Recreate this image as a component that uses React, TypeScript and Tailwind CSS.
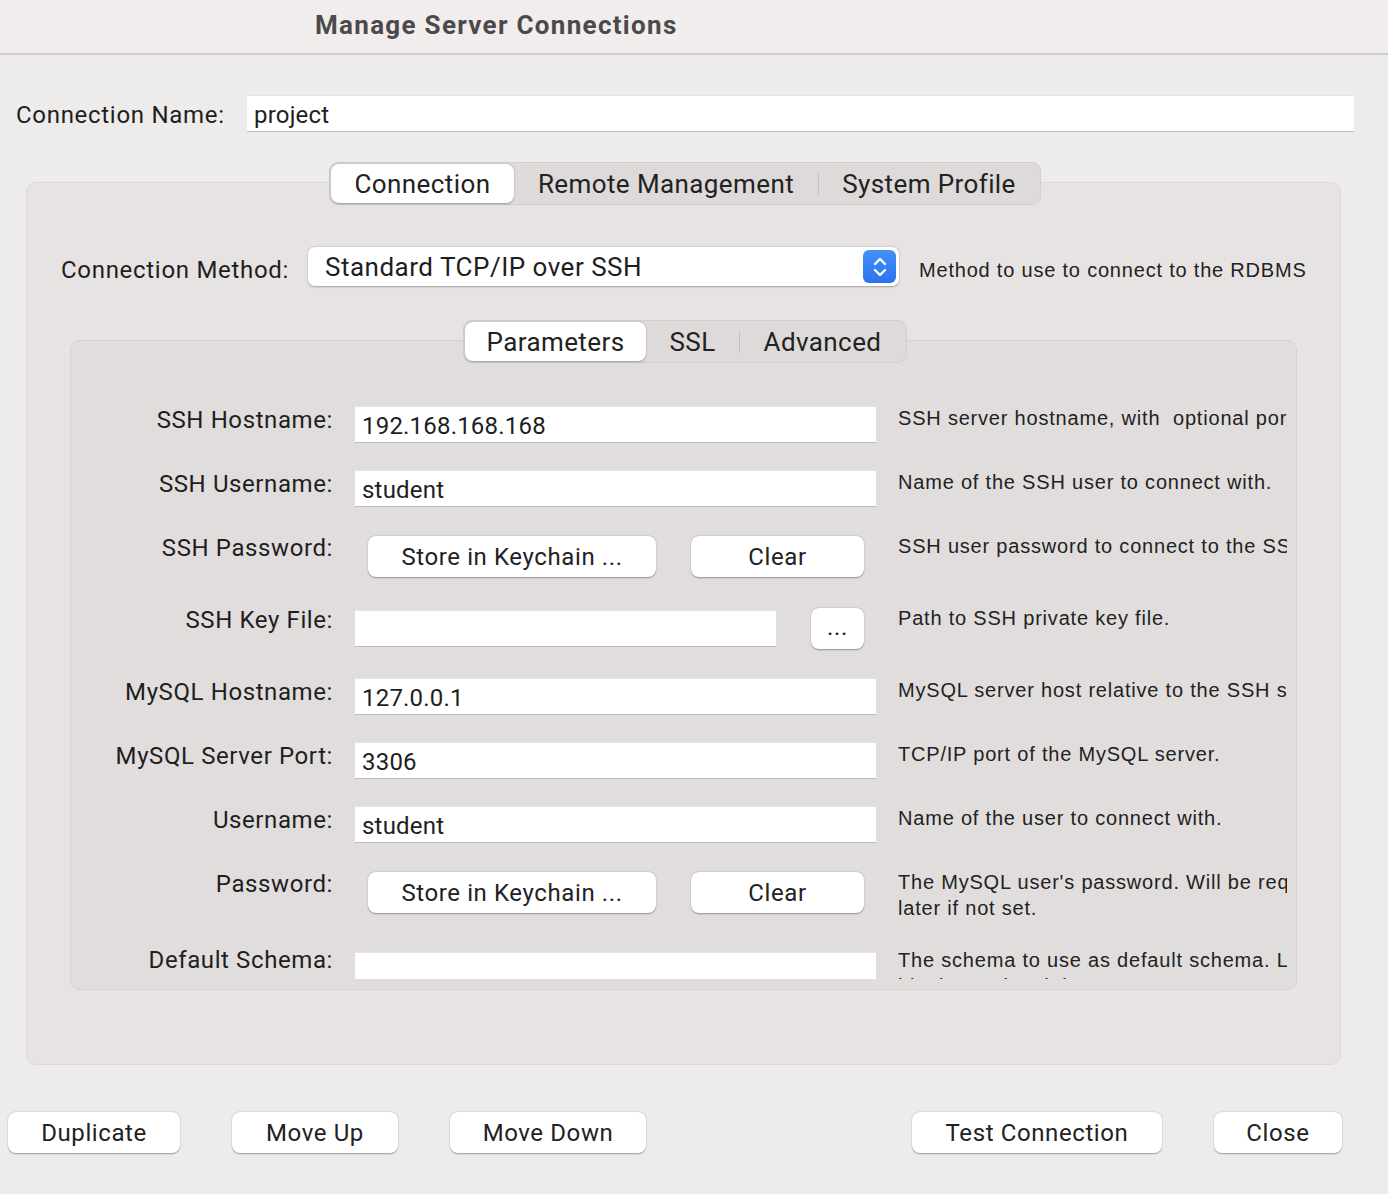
import React from 'react'

const sans = { fontFamily: 'Roboto, "Noto Sans", sans-serif' }
const desc = { fontFamily: '"Liberation Sans", Arial, sans-serif' }

function TextInput({ value = '', width = 'w-[521px]', extra = '' }: { value?: string; width?: string; extra?: string }) {
    return (
        <div className={`${width} h-[37px] bg-white border-t border-t-[#e4e2e2] border-b border-b-[#bdbaba] flex items-center pl-[7px] pt-[3px] text-[24px] leading-[30px] tracking-[0.2px] text-[#1e1e1e] ${extra}`}>
            {value}
        </div>
    )
}

function MacButton({ label, className = '' }: { label: string; className?: string }) {
    return (
        <div className={`h-[41px] bg-white rounded-[8px] shadow-[0_0.5px_1.5px_rgba(0,0,0,0.35)] flex items-center justify-center text-[24px] leading-[30px] tracking-[0.6px] text-[#222] ${className}`}>
            {label}
        </div>
    )
}

function Segmented({ items, widths, selected }: { items: string[]; widths: string[]; selected: number }) {
    return (
        <div className="relative z-10 mx-auto flex h-[43px] items-stretch rounded-[9px] bg-[#dedada] border border-[#d3cfcf] p-[1px]">
            {items.map((it, i) => (
                <div key={it} className={`${widths[i]} flex items-center`}>
                    {i > 0 && i !== selected && i - 1 !== selected && <div className="h-[22px] w-px bg-[#c4c0c0]" />}
                    <div className={`flex-1 h-full flex items-center justify-center text-[26px] leading-[30px] tracking-[0.4px] text-[#222] ${i === selected ? 'bg-white rounded-[8px] shadow-[0_0.5px_2px_rgba(0,0,0,0.3)]' : ''}`}>
                        {it}
                    </div>
                </div>
            ))}
        </div>
    )
}

interface Row {
    label: string
    h: string
    desc: string[]
    kind: 'input' | 'password' | 'file'
    value?: string
}

const rows: Row[] = [
    { label: 'SSH Hostname:', h: 'h-[64px]', desc: ['SSH server hostname, with  optional port number.'], kind: 'input', value: '192.168.168.168' },
    { label: 'SSH Username:', h: 'h-[64px]', desc: ['Name of the SSH user to connect with.'], kind: 'input', value: 'student' },
    { label: 'SSH Password:', h: 'h-[72px]', desc: ['SSH user password to connect to the SSH tunnel.'], kind: 'password' },
    { label: 'SSH Key File:', h: 'h-[72px]', desc: ['Path to SSH private key file.'], kind: 'file' },
    { label: 'MySQL Hostname:', h: 'h-[64px]', desc: ['MySQL server host relative to the SSH server.'], kind: 'input', value: '127.0.0.1' },
    { label: 'MySQL Server Port:', h: 'h-[64px]', desc: ['TCP/IP port of the MySQL server.'], kind: 'input', value: '3306' },
    { label: 'Username:', h: 'h-[64px]', desc: ['Name of the user to connect with.'], kind: 'input', value: 'student' },
    { label: 'Password:', h: 'h-[76px]', desc: ["The MySQL user's password. Will be requested", 'later if not set.'], kind: 'password' },
    { label: 'Default Schema:', h: 'h-[70px]', desc: ['The schema to use as default schema. Leave', 'blank to select it later.'], kind: 'input', value: '' },
]

function ParamRow({ row, last }: { row: Row; last: boolean }) {
    return (
        <div className={`flex items-start ${row.h}`}>
            <div className="w-[262px] h-[30px] -mt-[1px] leading-[30px] text-right text-[24px] tracking-[0.6px] text-[#1e1e1e] shrink-0">{row.label}</div>
            <div className="w-[565px] shrink-0 pl-[22px]">
                {row.kind === 'input' && <TextInput value={row.value} extra={last ? 'mt-[6px]' : ''} />}
                {row.kind === 'password' && (
                    <div className="flex items-center mt-[2px]">
                        <MacButton label="Store in Keychain ..." className="ml-[13px] w-[288px]" />
                        <MacButton label="Clear" className="ml-[35px] w-[173px]" />
                    </div>
                )}
                {row.kind === 'file' && (
                    <div className="flex items-start">
                        <TextInput width="w-[421px]" extra="mt-[4px]" />
                        <MacButton label="..." className="ml-[35px] w-[53px] mt-[2px] pb-[4px]" />
                    </div>
                )}
            </div>
            <div style={desc} className={`w-[389px] overflow-hidden text-[20px] leading-[26px] tracking-[0.8px] text-[#222] whitespace-pre ${last ? 'mt-[1px]' : '-mt-[1px]'}`}>
                {row.desc.map(d => <div key={d}>{d}</div>)}
            </div>
        </div>
    )
}

export default function App() {
    return (
        <div style={sans} className="w-[1388px] h-[1194px] bg-[#eeebeb] overflow-hidden">
            <div className="h-[55px] bg-[#f1eded] border-b-2 border-[#cfcbcb] flex items-center pl-[315px] pb-[3px]">
                <span className="text-[26px] leading-[32px] font-bold tracking-[1.3px] text-[#4b4949]">Manage Server Connections</span>
            </div>

            <div className="flex items-center mt-[40px] pl-[16px]">
                <div className="w-[231px] pt-[2px] text-[24px] leading-[30px] tracking-[0.7px] text-[#1e1e1e]">Connection Name:</div>
                <TextInput value="project" width="w-[1107px]" />
            </div>

            {/* outer group */}
            <div className="ml-[26px] mt-[50px] w-[1315px] h-[883px] rounded-[10px] bg-[#e7e3e3] border border-[#dcd8d8] flex flex-col">
                <div className="-mt-[21px] flex justify-center pl-[3px]">
                    <Segmented items={['Connection', 'Remote Management', 'System Profile']} widths={['w-[183px]', 'w-[304px]', 'w-[221px]']} selected={0} />
                </div>

                <div className="flex items-center mt-[42px] pl-[34px]">
                    <div className="w-[247px] pt-[7px] text-[24px] leading-[30px] tracking-[0.7px] text-[#1e1e1e]">Connection Method:</div>
                    <div className="w-[591px] h-[39px] bg-white rounded-[7px] shadow-[0_0.5px_2px_rgba(0,0,0,0.3)] flex items-center justify-between pl-[17px] pr-[3px]">
                        <span className="text-[26px] leading-[30px] tracking-[0.5px] text-[#1e1e1e]">Standard TCP/IP over SSH</span>
                        <div className="w-[33px] h-[33px] rounded-[6px] bg-gradient-to-b from-[#4591f8] to-[#2b73ee] flex items-center justify-center">
                            <svg width="16" height="24" viewBox="0 0 16 24" fill="none" stroke="white" strokeWidth="2.4" strokeLinecap="round" strokeLinejoin="round">
                                <path d="M3 9 L8 4 L13 9" />
                                <path d="M3 15 L8 20 L13 15" />
                            </svg>
                        </div>
                    </div>
                    <div style={desc} className="ml-[20px] pt-[7px] text-[20px] leading-[26px] tracking-[0.8px] text-[#222]">Method to use to connect to the RDBMS</div>
                </div>

                {/* inner group */}
                <div className="ml-[43px] mt-[54px] w-[1227px] rounded-[10px] bg-[#e1dddd] border border-[#d6d2d2] pb-[10px]">
                    <div className="-mt-[21px] flex justify-center pl-[3px]">
                        <Segmented items={['Parameters', 'SSL', 'Advanced']} widths={['w-[181px]', 'w-[93px]', 'w-[166px]']} selected={0} />
                    </div>
                    <div className="h-[616px] overflow-hidden pt-[43px]">
                        {rows.map((r, i) => <ParamRow key={r.label} row={r} last={i === rows.length - 1} />)}
                    </div>
                </div>
            </div>

            <div className="flex items-center mt-[47px] pl-[8px]">
                <MacButton label="Duplicate" className="w-[172px]" />
                <MacButton label="Move Up" className="ml-[52px] w-[166px]" />
                <MacButton label="Move Down" className="ml-[52px] w-[196px]" />
                <MacButton label="Test Connection" className="ml-[266px] w-[250px]" />
                <MacButton label="Close" className="ml-[52px] w-[128px]" />
            </div>
        </div>
    )
}
